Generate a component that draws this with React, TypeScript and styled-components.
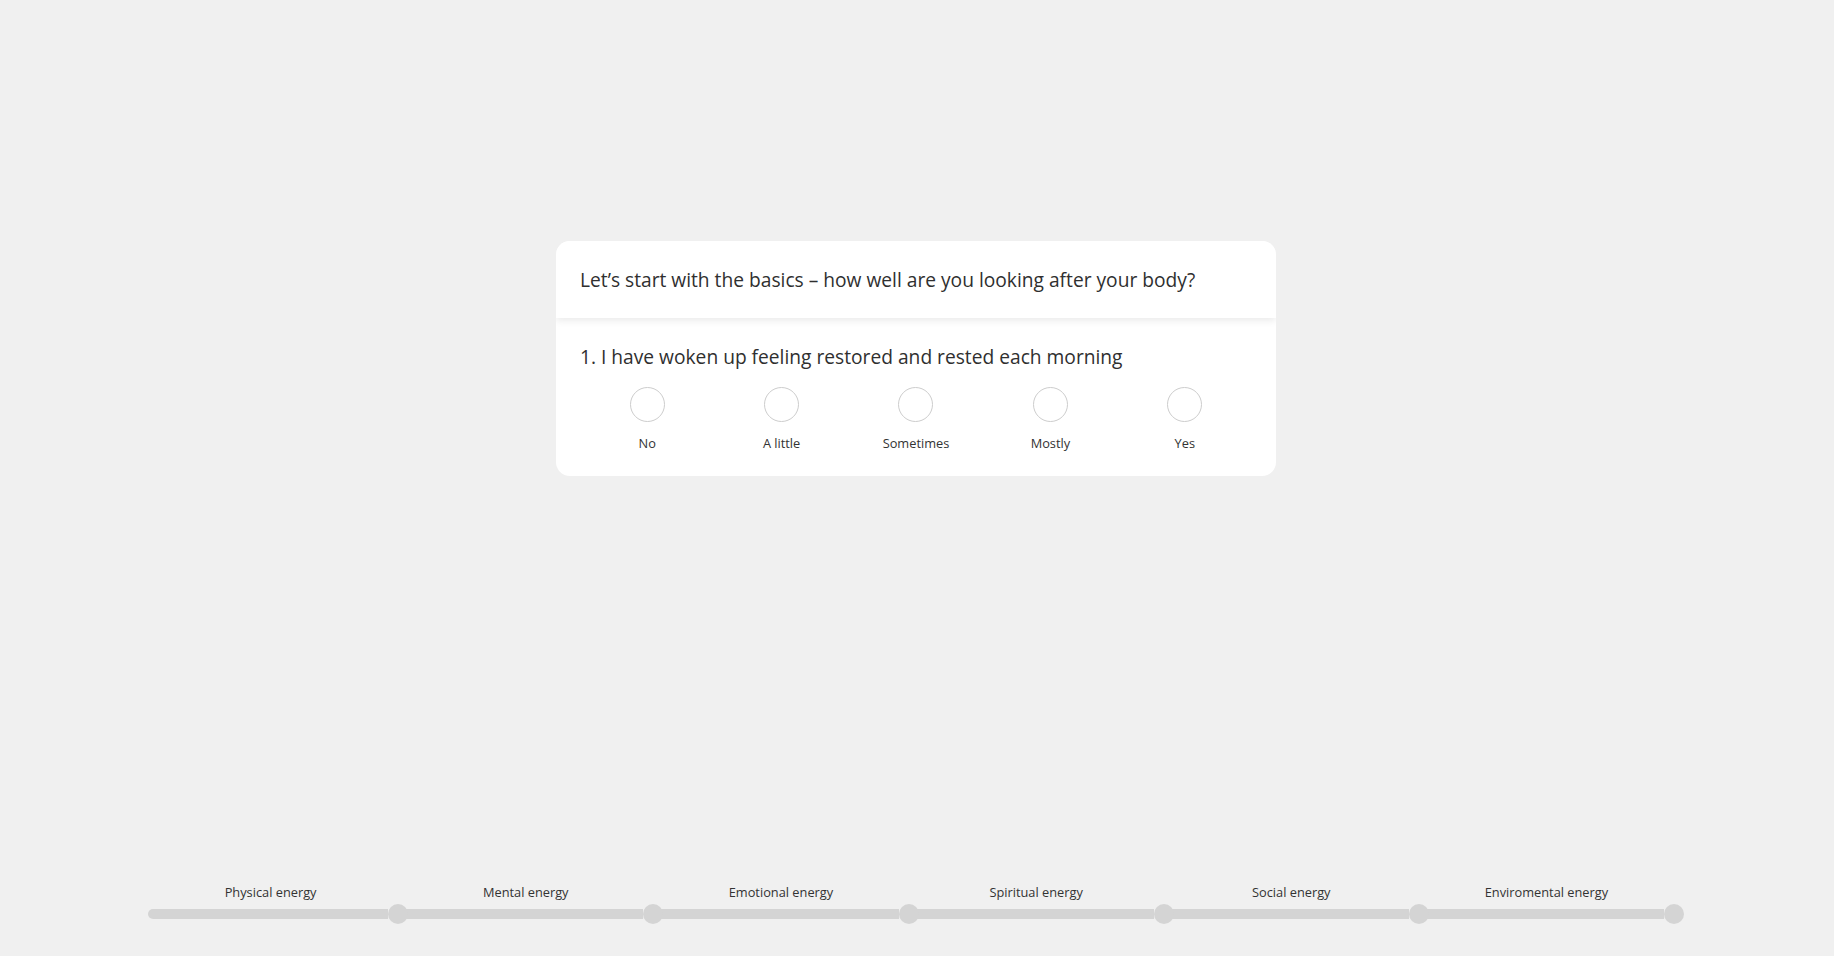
import React from 'react';
import styled, { createGlobalStyle } from 'styled-components';

const GlobalStyle = createGlobalStyle`
  html, body {
    margin: 0;
    padding: 0;
    background: #f0f0f0;
    font-family: 'Open Sans', 'Liberation Sans', sans-serif;
    color: #333;
  }
  * {
    box-sizing: border-box;
  }
`;

const Page = styled.div`
  min-height: 100vh;
  padding-right: 2px;
  display: flex;
  flex-direction: column;
`;

const Main = styled.main`
  flex: 1;
  display: flex;
  justify-content: center;
  align-items: flex-start;
  padding-top: 241px;
`;

const Card = styled.section`
  width: 720px;
  background: #fff;
  border-radius: 14px;
  overflow: hidden;
`;

const CardHeader = styled.header`
  position: relative;
  padding: 24px;
  background: #fff;
  box-shadow: 0 3px 7px rgba(0, 0, 0, 0.08);
`;

const Title = styled.h1`
  margin: 0;
  font-size: 19.2px;
  font-weight: 400;
  line-height: 29px;
  color: #2f2f2f;
`;

const CardBody = styled.div`
  padding: 25px 24px 24px;
`;

const Question = styled.h2`
  margin: 0;
  font-size: 19.2px;
  font-weight: 400;
  line-height: 27px;
  color: #2f2f2f;
`;

const Options = styled.div`
  display: grid;
  grid-template-columns: repeat(5, 1fr);
  margin-top: 17px;
`;

const Option = styled.label`
  display: flex;
  flex-direction: column;
  align-items: center;
  gap: 12px;
  cursor: pointer;
`;

const Radio = styled.span`
  width: 35px;
  height: 35px;
  border-radius: 50%;
  border: 1px solid #cdcdcd;
  background: #fff;
`;

const OptionLabel = styled.span`
  font-size: 12.8px;
  line-height: 18px;
  color: #333;
`;

const Progress = styled.nav`
  width: 1536px;
  margin: 0 auto;
  padding: 0 5px 32px 0;
  display: flex;
`;

const Step = styled.div`
  flex: 1;
  display: flex;
  flex-direction: column;
`;

const StepLabel = styled.span`
  font-size: 12.8px;
  line-height: 18px;
  text-align: center;
  padding-right: 10px;
  color: #333;
  margin-bottom: 3px;
`;

const Bar = styled.div`
  display: flex;
  align-items: center;
  height: 20px;
`;

const Line = styled.div<{ $first?: boolean }>`
  flex: 1;
  height: 10px;
  background: #d4d4d4;
  border-radius: ${(p) => (p.$first ? '5px 0 0 5px' : '0')};
`;

const Dot = styled.span`
  width: 20px;
  height: 20px;
  margin-right: -5px;
  border-radius: 50%;
  background: #d4d4d4;
  flex-shrink: 0;
  position: relative;
`;

const answers = ['No', 'A little', 'Sometimes', 'Mostly', 'Yes'];

const steps = [
  'Physical energy',
  'Mental energy',
  'Emotional energy',
  'Spiritual energy',
  'Social energy',
  'Enviromental energy',
];

export default function App() {
  return (
    <Page>
      <GlobalStyle />
      <Main>
        <Card>
          <CardHeader>
            <Title>Let’s start with the basics – how well are you looking after your body?</Title>
          </CardHeader>
          <CardBody>
            <Question>1. I have woken up feeling restored and rested each morning</Question>
            <Options>
              {answers.map((a) => (
                <Option key={a}>
                  <Radio />
                  <OptionLabel>{a}</OptionLabel>
                </Option>
              ))}
            </Options>
          </CardBody>
        </Card>
      </Main>
      <Progress>
        {steps.map((s, i) => (
          <Step key={s}>
            <StepLabel>{s}</StepLabel>
            <Bar>
              <Line $first={i === 0} />
              <Dot />
            </Bar>
          </Step>
        ))}
      </Progress>
    </Page>
  );
}
